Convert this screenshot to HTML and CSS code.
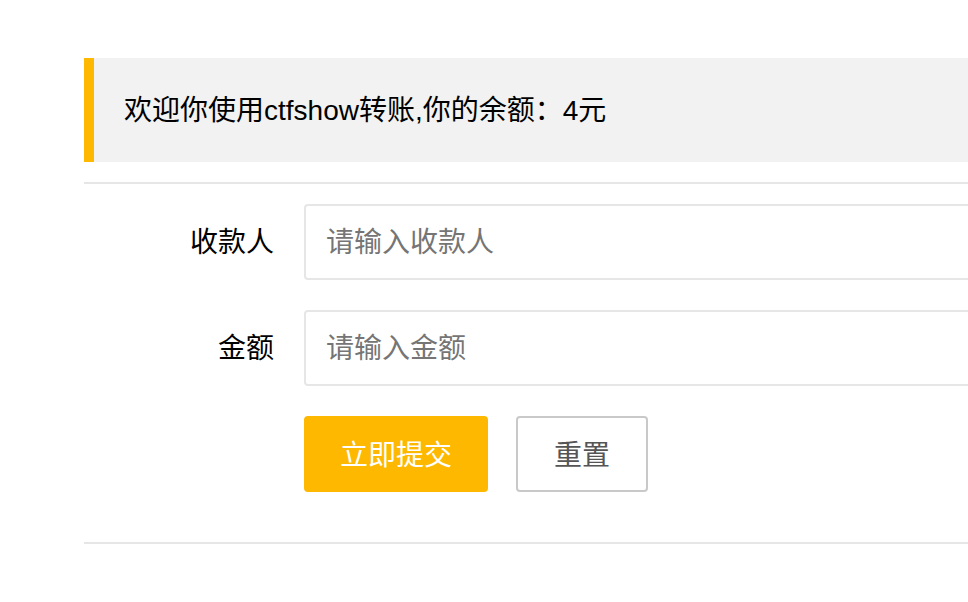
FILE: index.html
```html
<!DOCTYPE html>
<html lang="zh-CN">
<head>
<meta charset="utf-8">
<title>ctfshow转账</title>
<link rel="stylesheet" href="styles.css">
</head>
<body>
<div class="page">
  <blockquote class="quote">欢迎你使用ctfshow转账,你的余额：4元</blockquote>
  <hr class="line">
  <form class="form">
    <div class="form-item">
      <label class="form-label">收款人</label>
      <div class="input-block"><input class="input" type="text" placeholder="请输入收款人"></div>
    </div>
    <div class="form-item">
      <label class="form-label">金额</label>
      <div class="input-block"><input class="input" type="text" placeholder="请输入金额"></div>
    </div>
    <div class="form-item">
      <div class="input-block buttons">
        <button type="button" class="btn btn-warm">立即提交</button>
        <button type="reset" class="btn btn-primary">重置</button>
      </div>
    </div>
  </form>
  <hr class="line">
</div>
</body>
</html>
```
FILE: styles.css
```css
* { box-sizing: border-box; }
html, body { margin: 0; padding: 0; background: #fff; overflow: hidden; }
body {
  font-family: "Liberation Sans", "Noto Sans CJK SC", sans-serif;
  font-size: 28px;
  color: #333;
}
.page {
  padding: 58px 0 0 84px;
}
.quote {
  margin: 0 0 20px 0;
  padding: 31px 30px 29px;
  line-height: 44px;
  border-left: 10px solid #FFB800;
  background: #f2f2f2;
  color: #000;
  font-size: 28px;
}
.line {
  margin: 20px 0;
  height: 2px;
  border: 0;
  background: #e6e6e6;
}
.form {
  margin: 0;
  display: flow-root;
  width: 1200px;
}
.form-item {
  display: flex;
  margin-bottom: 30px;
}
.form-label {
  width: 220px;
  padding: 0 30px;
  height: 76px;
  line-height: 78px;
  text-align: right;
  color: #000;
  flex: none;
}
.input-block {
  flex: 1;
}
.buttons {
  margin-left: 220px;
  display: flex;
  gap: 28px;
}
.input {
  display: block;
  width: 100%;
  height: 76px;
  padding: 2px 20px 0;
  border: 2px solid #e6e6e6;
  border-radius: 4px;
  font-family: inherit;
  font-size: 28px;
  color: #333;
  background: #fff;
  outline: none;
}
.input::placeholder { color: #757575; }
.btn {
  height: 76px;
  line-height: 72px;
  padding: 2px 0 0;
  border-radius: 4px;
  font-family: inherit;
  font-size: 28px;
  white-space: nowrap;
  text-align: center;
  cursor: pointer;
}
.btn-warm {
  width: 184px;
  background: #FFB800;
  border: 2px solid #FFB800;
  color: #fff;
}
.btn-primary {
  width: 132px;
  background: #fff;
  border: 2px solid #C9C9C9;
  color: #555;
}
```
